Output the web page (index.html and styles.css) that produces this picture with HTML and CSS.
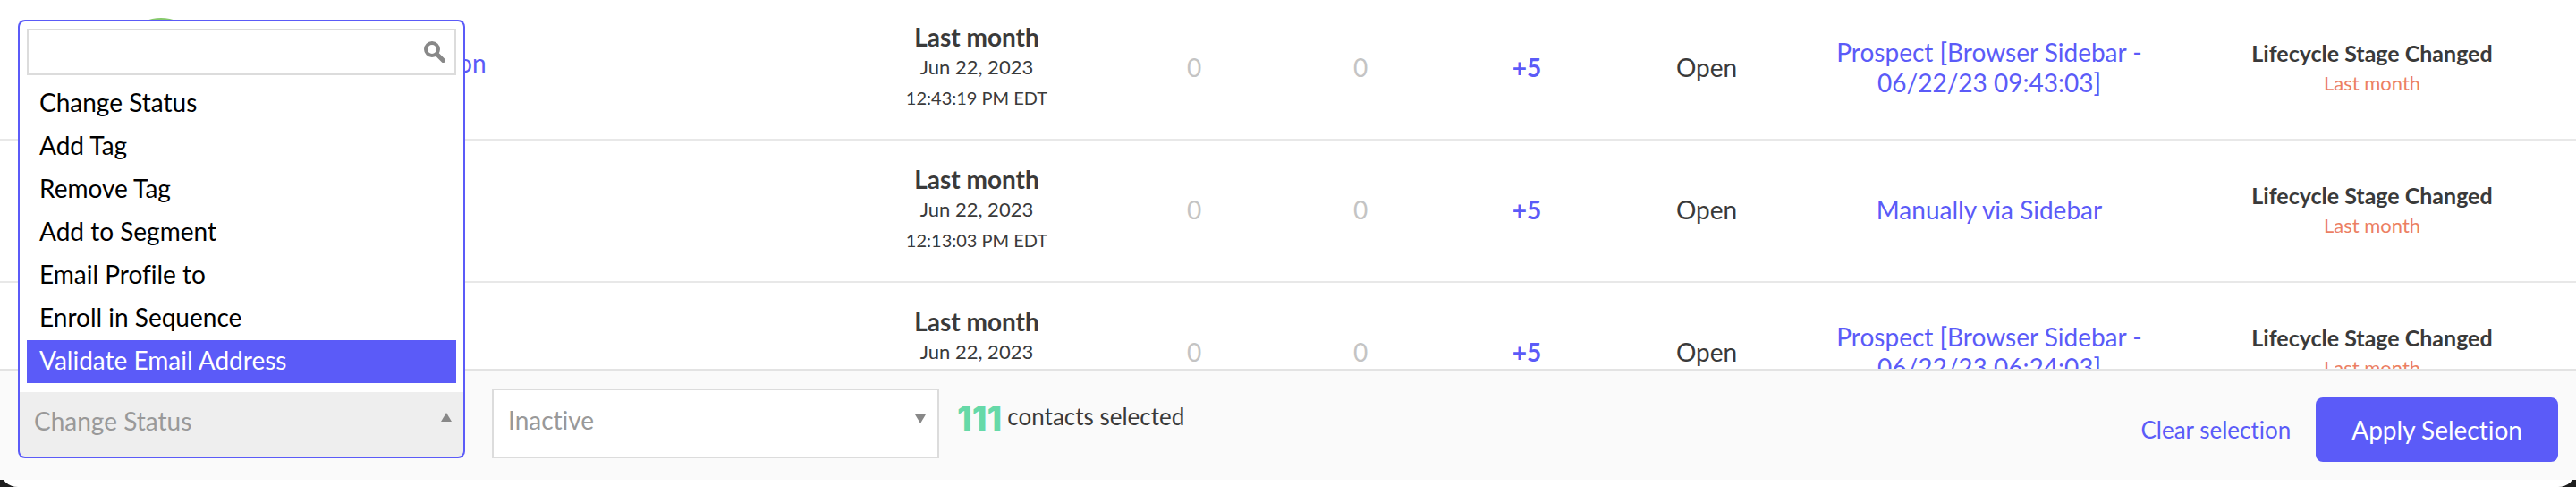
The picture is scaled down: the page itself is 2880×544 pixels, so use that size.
FILE: index.html
```html
<!DOCTYPE html>
<html lang="en">
<head>
    <meta charset="UTF-8">
    <meta name="viewport" content="width=device-width, initial-scale=1.0">
    <title>Contacts</title>
    <link rel="stylesheet" href="styles.css">
</head>
<body>
    <div class="page">
        <main class="contacts">
            <table>
                <colgroup>
                    <col>
                    <col class="col-date">
                    <col class="col-count">
                    <col class="col-count">
                    <col class="col-count">
                    <col class="col-status">
                    <col class="col-source">
                    <col class="col-event">
                </colgroup>
                <tbody>
                    <tr>
                        <td class="name"><div class="person"><span class="avatar"></span><a href="#">on</a></div></td>
                        <td><strong>Last month</strong><small>Jun 22, 2023</small><small class="time">12:43:19 PM EDT</small></td>
                        <td class="zero">0</td>
                        <td class="zero">0</td>
                        <td class="score">+5</td>
                        <td>Open</td>
                        <td><a href="#">Prospect [Browser Sidebar -<br>06/22/23 09:43:03]</a></td>
                        <td class="event"><strong>Lifecycle Stage Changed</strong><small>Last month</small></td>
                    </tr>
                    <tr>
                        <td class="name"><div class="person"><span class="avatar"></span></div></td>
                        <td><strong>Last month</strong><small>Jun 22, 2023</small><small class="time">12:13:03 PM EDT</small></td>
                        <td class="zero">0</td>
                        <td class="zero">0</td>
                        <td class="score">+5</td>
                        <td>Open</td>
                        <td><a href="#">Manually via Sidebar</a></td>
                        <td class="event"><strong>Lifecycle Stage Changed</strong><small>Last month</small></td>
                    </tr>
                    <tr>
                        <td class="name"><div class="person"><span class="avatar"></span></div></td>
                        <td><strong>Last month</strong><small>Jun 22, 2023</small><small class="time">&nbsp;</small></td>
                        <td class="zero">0</td>
                        <td class="zero">0</td>
                        <td class="score">+5</td>
                        <td>Open</td>
                        <td><a href="#">Prospect [Browser Sidebar -<br>06/22/23 06:24:03]</a></td>
                        <td class="event"><strong>Lifecycle Stage Changed</strong><small>Last month</small></td>
                    </tr>
                </tbody>
            </table>
        </main>

        <footer class="bulk-bar">
            <div class="picker open">
                <div class="menu">
                    <div class="search">
                        <input type="text" aria-label="Search actions">
                        <svg width="24" height="24" viewBox="0 0 24 24" fill="none" stroke="#888" stroke-linecap="round">
                            <circle cx="9" cy="9" r="7" stroke-width="4"/>
                            <path d="M14.5 14.5L21.5 21.5" stroke-width="5"/>
                        </svg>
                    </div>
                    <ul role="listbox" aria-label="Actions">
                        <li role="option">Change Status</li>
                        <li role="option">Add Tag</li>
                        <li role="option">Remove Tag</li>
                        <li role="option">Add to Segment</li>
                        <li role="option">Email Profile to</li>
                        <li role="option">Enroll in Sequence</li>
                        <li role="option" class="active" aria-selected="true">Validate Email Address</li>
                    </ul>
                </div>
                <select aria-label="Action">
                    <option>Change Status</option>
                </select>
                <svg class="arrow" width="12" height="10" viewBox="0 0 12 10"><path d="M6 0L12 10H0z"/></svg>
            </div>

            <div class="picker">
                <select aria-label="Status">
                    <option>Inactive</option>
                </select>
                <svg class="arrow" width="12" height="10" viewBox="0 0 12 10"><path d="M0 0H12L6 10z"/></svg>
            </div>

            <p class="selected"><b>111</b><span>contacts selected</span></p>

            <div class="actions">
                <a href="#">Clear selection</a>
                <button type="button">Apply Selection</button>
            </div>
        </footer>
    </div>
</body>
</html>
```
FILE: styles.css
```css
* {
    box-sizing: border-box;
}
body {
    background-color: #1e1e1e;
    color: #3a3a3a;
    font-family: Lato, "Liberation Sans", sans-serif;
    font-size: 28px;
    font-variant-ligatures: none;
    line-height: 34px;
    margin: 0;
}
a {
    color: #5b5bf8;
    text-decoration: none;
}
.page {
    display: flex;
    flex-direction: column;
    height: 100vh;
    padding-bottom: 8px;
    background-color: #fff;
    border-radius: 0 0 20px 20px;
}

/* Contacts table */
.contacts {
    flex: 1;
    min-height: 0;
    overflow: hidden;
}
table {
    width: 100%;
    margin-top: -2px;
    table-layout: fixed;
    border-spacing: 0;
    background: #fff;
}
.col-date {
    width: 300px;
}
.col-count {
    width: 186px;
}
.col-status {
    width: 216px;
}
.col-source {
    width: 416px;
}
.col-event {
    width: 448px;
}
td {
    height: 159px;
    padding: 0 0 4px;
    border-bottom: 2px solid #e8e8e8;
    text-align: center;
    vertical-align: middle;
}
td strong, td small {
    display: block;
}
td small {
    font-size: 22px;
}
td .time {
    font-size: 20px;
}
.name {
    padding: 0 0 14px 130px;
}
.person {
    display: flex;
    align-items: center;
    gap: 282px;
}
.avatar {
    width: 100px;
    height: 100px;
    border-radius: 50%;
    background-color: #86c96c;
}
.zero {
    color: #c4c4c4;
}
.score {
    color: #5b5bf8;
    font-weight: bold;
}
.event {
    padding: 0 8px 2px 0;
}
.event strong {
    font-size: 25px;
}
.event small {
    color: #ec7f63;
}

/* Bulk action bar */
.bulk-bar {
    display: flex;
    align-items: flex-start;
    padding: 20px;
    border-top: 2px solid #e3e3e3;
    background-color: #fafafa;
}
.picker {
    position: relative;
    width: 500px;
    margin-right: 20px;
}
.picker select {
    display: block;
    width: 100%;
    height: 78px;
    padding: 0 40px 8px 16px;
    border: 2px solid #dcdcdc;
    border-radius: 0;
    background-color: #fff;
    color: #999;
    font: inherit;
    appearance: none;
}
.picker .arrow {
    position: absolute;
    right: 15px;
    top: 29px;
    fill: #888;
}
.picker.open {
    margin-top: 4px;
    margin-right: 30px;
}
.picker.open select {
    height: 74px;
    border-color: #5b5bf8;
    border-top: none;
    border-radius: 0 0 8px 8px;
    background-color: #eee;
}
.picker.open .arrow {
    top: 23px;
}
.menu {
    position: absolute;
    left: 0;
    bottom: 100%;
    width: 100%;
    padding: 8px 8px 10px;
    border: 2px solid #5b5bf8;
    border-bottom: none;
    border-radius: 8px 8px 0 0;
    background-color: #fff;
}
.search {
    position: relative;
    margin-bottom: 8px;
}
.search input {
    display: block;
    width: 100%;
    height: 52px;
    padding: 0 44px 0 10px;
    border: 2px solid #dcdcdc;
    font: inherit;
}
.search svg {
    position: absolute;
    right: 12px;
    top: 14px;
}
.menu ul {
    list-style: none;
    margin: 0;
    padding: 0;
}
.menu li {
    padding: 0 14px 4px;
    color: #000;
    line-height: 44px;
}
.menu .active {
    background-color: #5b5bf8;
    color: #fff;
}
.selected {
    display: flex;
    align-items: flex-start;
    gap: 6px;
    margin: 14px 0 0;
    font-size: 26px;
}
.selected b {
    color: #66d9a8;
    font-family: Inter, "Liberation Sans", sans-serif;
    font-size: 38px;
    font-weight: 800;
    line-height: 38px;
}
.actions {
    display: flex;
    align-items: center;
    gap: 28px;
    margin: 10px 0 0 auto;
    font-size: 26px;
}
.actions button {
    height: 72px;
    padding: 0 40px;
    border: none;
    border-radius: 8px;
    background-color: #5b5bf8;
    color: #fff;
    font-family: inherit;
    font-size: 28px;
    font-variant-ligatures: none;
    cursor: pointer;
}
```
